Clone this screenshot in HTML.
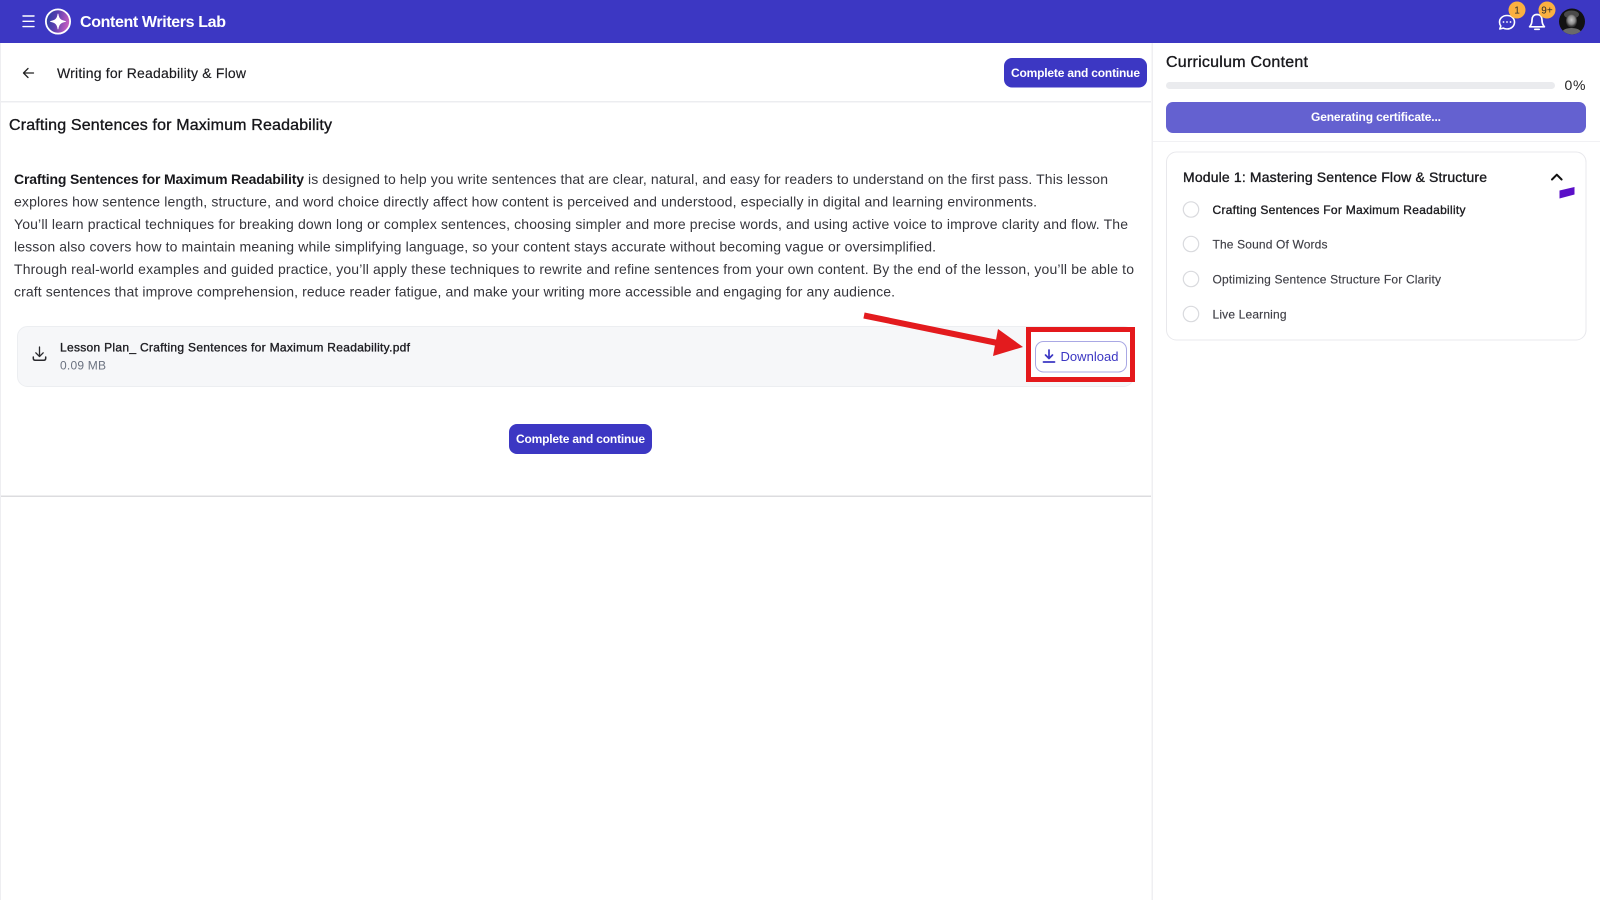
<!DOCTYPE html>
<html lang="en">
<head>
<meta charset="utf-8">
<title>Writing for Readability &amp; Flow</title>
<style>
html,body{margin:0;padding:0;background:#fff;width:1600px;height:900px;overflow:hidden}
svg{display:block;position:absolute;left:0;top:0}
text{font-family:"Liberation Sans",sans-serif;white-space:pre}
.b{font-weight:700}
.m{stroke-width:.35px}
.n{stroke-width:.15px}
</style>
</head>
<body>
<svg width="1600" height="900" viewBox="0 0 1600 900" xmlns="http://www.w3.org/2000/svg">
<defs>
<linearGradient id="lg" x1="0" y1="0" x2="1" y2="0.25"><stop offset="0" stop-color="#1f3f9e"/><stop offset=".5" stop-color="#5a3fb0"/><stop offset="1" stop-color="#c25cc0"/></linearGradient>
<radialGradient id="face" cx=".5" cy=".42" r=".5"><stop offset="0" stop-color="#c8c8c8"/><stop offset=".65" stop-color="#8a8a8a"/><stop offset="1" stop-color="#333"/></radialGradient>
<clipPath id="av"><circle cx="1572" cy="21.5" r="13"/></clipPath>
</defs>
<rect width="1600" height="900" fill="#fff"/>
<!-- header -->
<rect width="1600" height="43" fill="#3c37c3"/>
<g stroke="#fff" stroke-width="1.4" stroke-linecap="round"><path d="M23 16h11M23 21.300h11M23 26.600h11"/></g>
<circle cx="58" cy="21.500" r="12.100" fill="url(#lg)" stroke="#fff" stroke-width="1.800"/>
<path d="M58 14C58.700 18.800 60.500 20.500 65.500 21.500C60.500 22.500 58.700 24.200 58 29C57.300 24.200 55.500 22.500 50.500 21.500C55.500 20.500 57.300 18.800 58 14Z" fill="#fff" stroke="#fff" stroke-width=".8" stroke-linejoin="round"/>
<text x="80" y="27" class="b" font-size="16" fill="#fff" textLength="146">Content Writers Lab</text>

<!-- chat icon -->
<path d="M1507 15.500c-4.400 0-7.500 2.900-7.500 6.600 0 1.500.5 2.800 1.300 3.900l-1 3 3.400-.9c1.100.6 2.400.9 3.800.9 4.400 0 7.500-3 7.500-6.900s-3.100-6.600-7.500-6.600z" fill="none" stroke="#fff" stroke-width="1.600" stroke-linejoin="round"/>
<circle cx="1503.500" cy="22" r=".9" fill="#fff"/><circle cx="1507" cy="22" r=".9" fill="#fff"/><circle cx="1510.500" cy="22" r=".9" fill="#fff"/>
<circle cx="1517" cy="10" r="8.500" fill="#fbb040"/>
<text x="1517" y="13.500" font-size="10" text-anchor="middle" fill="#2b2b2b">1</text>
<!-- bell icon -->
<path d="M1537 14.500c-3.500 0-5 2.700-5 5.500 0 3.500-.8 5-2.400 6.800h14.800c-1.600-1.800-2.400-3.300-2.400-6.800 0-2.800-1.500-5.500-5-5.500z" fill="none" stroke="#fff" stroke-width="1.700" stroke-linejoin="round"/>
<path d="M1534.800 29.300h4.400" stroke="#fff" stroke-width="1.700" stroke-linecap="round"/>
<circle cx="1547" cy="10" r="8.500" fill="#fbb040"/>
<text x="1547" y="13.500" font-size="10" text-anchor="middle" fill="#2b2b2b">9+</text>
<!-- avatar -->
<circle cx="1572" cy="21.500" r="13" fill="#121212"/>
<g clip-path="url(#av)">
<ellipse cx="1571.500" cy="14.500" rx="7.500" ry="4" fill="#4a4a4a"/>
<ellipse cx="1571.500" cy="21" rx="5.500" ry="6.500" fill="url(#face)"/>
<path d="M1560 36c1-6 6-8 11.500-8s10.500 2 12 8z" fill="#6a6a6a"/>
</g>

<!-- panes -->
<rect x="0" y="43" width="1" height="857" fill="#eeeef1"/>
<rect x="1151.500" y="43" width="1.500" height="857" fill="#efeff2"/>
<rect x="1" y="101" width="1150" height="1.500" fill="#ecedf0"/>
<rect x="1" y="495.500" width="1150" height="1.500" fill="#dcdcdf"/>

<!-- lesson top bar -->
<path d="M33.500 73H23.500M28 68.500l-4.500 4.500 4.500 4.500" fill="none" stroke="#222" stroke-width="1.300" stroke-linecap="round" stroke-linejoin="round"/>
<text x="57" y="78" class="n" stroke="#1b1b1f" font-size="14" fill="#1b1b1f" textLength="189">Writing for Readability &amp; Flow</text>
<rect x="1004" y="58" width="143" height="29.500" rx="8" fill="#3c37c3"/>
<text x="1011" y="77" class="b" font-size="12" fill="#fff" textLength="129">Complete and continue</text>

<!-- heading -->
<text x="9" y="130" class="m" stroke="#16161a" font-size="16" fill="#16161a" textLength="323">Crafting Sentences for Maximum Readability</text>

<!-- body -->
<g font-size="14" fill="#36363c">
<text x="14" y="184" class="b" fill="#18181c" textLength="290">Crafting Sentences for Maximum Readability</text>
<text x="308" y="184" textLength="800">is designed to help you write sentences that are clear, natural, and easy for readers to understand on the first pass. This lesson</text>
<text x="14" y="206.500" textLength="1023">explores how sentence length, structure, and word choice directly affect how content is perceived and understood, especially in digital and learning environments.</text>
<text x="14" y="229" textLength="1114">You’ll learn practical techniques for breaking down long or complex sentences, choosing simpler and more precise words, and using active voice to improve clarity and flow. The</text>
<text x="14" y="251.500" textLength="922">lesson also covers how to maintain meaning while simplifying language, so your content stays accurate without becoming vague or oversimplified.</text>
<text x="14" y="274" textLength="1120">Through real-world examples and guided practice, you’ll apply these techniques to rewrite and refine sentences from your own content. By the end of the lesson, you’ll be able to</text>
<text x="14" y="296.500" textLength="881">craft sentences that improve comprehension, reduce reader fatigue, and make your writing more accessible and engaging for any audience.</text>
</g>

<!-- file card -->
<rect x="17.500" y="326.500" width="1116" height="60" rx="10" fill="#f6f7f9" stroke="#eceef1"/>
<path d="M39.500 347v9M35.800 352.800l3.700 3.700 3.700-3.700" fill="none" stroke="#2a2a2e" stroke-width="1.300" stroke-linecap="round" stroke-linejoin="round"/>
<path d="M33.300 357v1.200c0 1.200.8 2 2 2h8.400c1.200 0 2-.8 2-2V357" fill="none" stroke="#2a2a2e" stroke-width="1.500" stroke-linecap="round"/>
<text x="60" y="351.500" class="m" stroke="#1d1d22" font-size="12" fill="#1d1d22" textLength="350">Lesson Plan_ Crafting Sentences for Maximum Readability.pdf</text>
<text x="60" y="369.500" font-size="12" fill="#6b7280" textLength="46">0.09 MB</text>

<!-- download + annotation -->
<rect x="1028.500" y="329.500" width="104" height="50" fill="#fff" stroke="#e4191c" stroke-width="5"/>
<rect x="1035.500" y="341.500" width="91" height="30.500" rx="8" fill="#fff" stroke="#a9a8e4"/>
<path d="M1049 350v8M1045.500 355l3.500 3.500 3.500-3.500" fill="none" stroke="#3c37c3" stroke-width="1.700" stroke-linecap="round" stroke-linejoin="round"/>
<path d="M1043.500 362h11" stroke="#3c37c3" stroke-width="1.800" stroke-linecap="round"/>
<text x="1060.500" y="361" font-size="13" fill="#3c37c3" textLength="58">Download</text>
<path d="M864 315.500L1000 343.500" stroke="#e31b1e" stroke-width="6" fill="none"/>
<path d="M998 329L1023 347L993 356Z" fill="#e31b1e"/>

<!-- bottom button -->
<rect x="509" y="424" width="143" height="30" rx="8" fill="#3c37c3"/>
<text x="516" y="443" class="b" font-size="12" fill="#fff" textLength="129">Complete and continue</text>

<!-- right panel -->
<text x="1166" y="67" class="m" stroke="#18181c" font-size="16" fill="#18181c" textLength="142">Curriculum Content</text>
<rect x="1166" y="82" width="389" height="7" rx="3.500" fill="#eaebee"/>
<text x="1564.500" y="90" font-size="14" fill="#222" textLength="21">0%</text>
<rect x="1166" y="102" width="420" height="31" rx="7" fill="#6461d0"/>
<text x="1311" y="121" class="b" font-size="12" fill="#fff" textLength="130">Generating certificate...</text>
<rect x="1153" y="141" width="447" height="1" fill="#f1f1f4"/>
<rect x="1166.500" y="152" width="419.500" height="188" rx="10" fill="#fff" stroke="#e8e8ec"/>
<text x="1183" y="182" class="m" stroke="#1a1a1e" font-size="14" fill="#1a1a1e" textLength="304">Module 1: Mastering Sentence Flow &amp; Structure</text>
<path d="M1552 179.500l4.800-4.800 4.800 4.800" fill="none" stroke="#111" stroke-width="2" stroke-linecap="round" stroke-linejoin="round"/>
<path d="M1559.500 190.500L1574.500 187V194.500L1559.500 198.500Z" fill="#5b10c8"/>
<g fill="#fff" stroke="#d9dade" stroke-width="1.200">
<circle cx="1191" cy="209.500" r="7.700"/>
<circle cx="1191" cy="244" r="7.700"/>
<circle cx="1191" cy="279" r="7.700"/>
<circle cx="1191" cy="314" r="7.700"/>
</g>
<text x="1212.500" y="214" class="m" stroke="#1c1c20" font-size="12" fill="#1c1c20" textLength="253">Crafting Sentences For Maximum Readability</text>
<text x="1212.500" y="248.500" class="n" stroke="#3f3f46" font-size="12" fill="#3f3f46" textLength="115">The Sound Of Words</text>
<text x="1212.500" y="283.500" class="n" stroke="#3f3f46" font-size="12" fill="#3f3f46" textLength="228.500">Optimizing Sentence Structure For Clarity</text>
<text x="1212.500" y="318.500" class="n" stroke="#3f3f46" font-size="12" fill="#3f3f46" textLength="74">Live Learning</text>
</svg>
</body>
</html>
